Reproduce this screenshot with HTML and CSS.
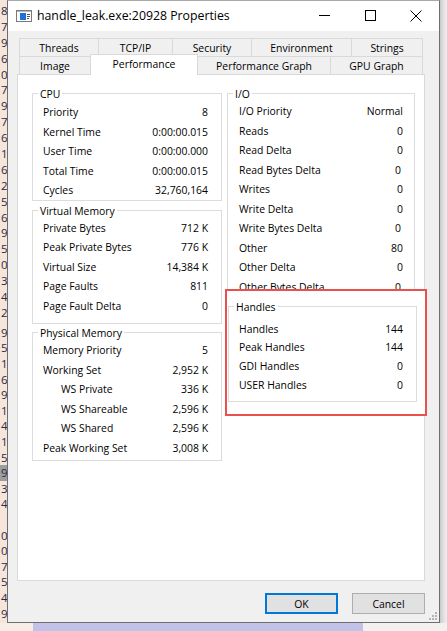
FILE: index.html
```html
<!DOCTYPE html>
<html>
<head>
<meta charset="utf-8">
<title>handle_leak.exe:20928 Properties</title>
<link rel="stylesheet" href="styles.css">
</head>
<body>
<div class="screen">
  <div class="strip">
    <div class="digits d1">
      <div>8</div><div>7</div><div>9</div><div>6</div><div>0</div><div>7</div><div>9</div><div>7</div><div>6</div><div>1</div>
      <div>6</div><div>2</div><div>5</div><div>6</div><div>9</div><div>5</div><div>0</div><div>3</div><div>4</div><div>2</div>
    </div>
    <div class="digits d2">
      <div>9</div><div>5</div><div>1</div><div>6</div><div>9</div><div>1</div><div>4</div><div>1</div><div>5</div><div class="hl">9</div>
      <div>3</div><div>4</div><div>&nbsp;</div><div>0</div><div>0</div><div>7</div><div>5</div><div>4</div><div>9</div>
    </div>
  </div>

  <div class="window">
    <div class="titlebar">
      <svg class="appicon" width="16" height="12" viewBox="0 0 16 12">
        <rect x="0.5" y="0.5" width="15" height="11" fill="#fff" stroke="#7a7a7a"/>
        <rect x="1" y="1" width="14" height="1" fill="#b8b8b8"/>
        <rect x="4" y="3" width="6" height="7" fill="#1e72d4"/>
        <path d="M11 4.5h3M11 6.5h3M11 8.5h2" stroke="#555" stroke-width="1"/>
      </svg>
      <span class="title">handle_leak.exe:20928 Properties</span>
      <div class="caption">
        <div class="cbtn"><svg width="11" height="11" viewBox="0 0 11 11"><path d="M0 5.5h11" stroke="#000" stroke-width="1"/></svg></div>
        <div class="cbtn"><svg width="11" height="11" viewBox="0 0 11 11"><rect x="0.5" y="0.5" width="10" height="10" fill="none" stroke="#000"/></svg></div>
        <div class="cbtn"><svg width="12" height="12" viewBox="0 0 12 12"><path d="M0.5 0.5L11.5 11.5M11.5 0.5L0.5 11.5" stroke="#000" stroke-width="1"/></svg></div>
      </div>
    </div>

    <div class="client">
      <div class="tabs">
        <div class="tabrow back">
          <div class="tab t-threads">Threads</div>
          <div class="tab t-tcp">TCP/IP</div>
          <div class="tab t-security">Security</div>
          <div class="tab t-env">Environment</div>
          <div class="tab t-strings">Strings</div>
        </div>
        <div class="tabrow front">
          <div class="tab t-image">Image</div>
          <div class="tab t-perf selected">Performance</div>
          <div class="tab t-pgraph">Performance Graph</div>
          <div class="tab t-gpu">GPU Graph</div>
        </div>
      </div>

      <div class="panel">
        <div class="col col-left">
          <div class="group cpu">
            <div class="gtitle">CPU</div>
            <div class="rows">
              <div class="row"><span>Priority</span><span>8</span></div>
              <div class="row"><span>Kernel Time</span><span>0:00:00.015</span></div>
              <div class="row"><span>User Time</span><span>0:00:00.000</span></div>
              <div class="row"><span>Total Time</span><span>0:00:00.015</span></div>
              <div class="row"><span>Cycles</span><span>32,760,164</span></div>
            </div>
          </div>
          <div class="group vm">
            <div class="gtitle">Virtual Memory</div>
            <div class="rows">
              <div class="row"><span>Private Bytes</span><span>712 K</span></div>
              <div class="row"><span>Peak Private Bytes</span><span>776 K</span></div>
              <div class="row"><span>Virtual Size</span><span>14,384 K</span></div>
              <div class="row"><span>Page Faults</span><span>811</span></div>
              <div class="row"><span>Page Fault Delta</span><span>0</span></div>
            </div>
          </div>
          <div class="group pm">
            <div class="gtitle">Physical Memory</div>
            <div class="rows">
              <div class="row"><span>Memory Priority</span><span>5</span></div>
              <div class="row"><span>Working Set</span><span>2,952 K</span></div>
              <div class="row sub"><span>WS Private</span><span>336 K</span></div>
              <div class="row sub"><span>WS Shareable</span><span>2,596 K</span></div>
              <div class="row sub"><span>WS Shared</span><span>2,596 K</span></div>
              <div class="row"><span>Peak Working Set</span><span>3,008 K</span></div>
            </div>
          </div>
        </div>

        <div class="col col-right">
          <div class="group io">
            <div class="gtitle">I/O</div>
            <div class="rows">
              <div class="row"><span>I/O Priority</span><span>Normal</span></div>
              <div class="row"><span>Reads</span><span>0</span></div>
              <div class="row"><span>Read Delta</span><span>0</span></div>
              <div class="row"><span>Read Bytes Delta</span><span class="nudge">0</span></div>
              <div class="row"><span>Writes</span><span>0</span></div>
              <div class="row"><span>Write Delta</span><span>0</span></div>
              <div class="row"><span>Write Bytes Delta</span><span class="nudge">0</span></div>
              <div class="row"><span>Other</span><span>80</span></div>
              <div class="row"><span>Other Delta</span><span>0</span></div>
              <div class="row"><span>Other Bytes Delta</span><span class="nudge">0</span></div>
            </div>
          </div>
          <div class="annot">
            <div class="group handles">
              <div class="gtitle">Handles</div>
              <div class="rows">
                <div class="row"><span>Handles</span><span>144</span></div>
                <div class="row"><span>Peak Handles</span><span>144</span></div>
                <div class="row"><span>GDI Handles</span><span>0</span></div>
                <div class="row"><span>USER Handles</span><span>0</span></div>
              </div>
            </div>
          </div>
        </div>
      </div>

      <div class="buttons">
        <div class="btn default">OK</div>
        <div class="btn">Cancel</div>
      </div>

      <svg class="grip" width="9" height="9" viewBox="0 0 9 9">
        <rect x="6" y="0" width="2" height="2" fill="#b4b4b4"/>
        <rect x="3" y="3" width="2" height="2" fill="#b4b4b4"/>
        <rect x="6" y="3" width="2" height="2" fill="#b4b4b4"/>
        <rect x="0" y="6" width="2" height="2" fill="#b4b4b4"/>
        <rect x="3" y="6" width="2" height="2" fill="#b4b4b4"/>
        <rect x="6" y="6" width="2" height="2" fill="#b4b4b4"/>
      </svg>
    </div>
  </div>

  <div class="shadow"></div>
</div>
<div class="floor">
  <div class="floor-a"></div>
  <div class="floor-b"></div>
  <div class="floor-c"></div>
</div>
</body>
</html>
```

FILE: styles.css
```css
html, body {
  margin: 0;
  padding: 0;
}
body {
  width: 447px;
  height: 631px;
  overflow: hidden;
  background: #f4ede8;
  font-family: "Open Sans", "Noto Sans", sans-serif;
  font-size: 10.4px;
  color: #000;
}

.screen {
  display: flex;
  height: 623px;
}

/* background app strip on the left */
.strip {
  width: 7px;
  flex: none;
  background: #f6e5da;
  overflow: hidden;
  font-size: 11.5px;
  color: #2a2a48;
}
.digits div {
  padding-left: 1px;
  white-space: nowrap;
}
.d1 {
  padding-top: 3px;
}
.d1 div {
  height: 15.9px;
  line-height: 15.9px;
}
.d2 {
  padding-top: 4px;
}
.d2 div {
  height: 15.6px;
  line-height: 15.6px;
}
.d2 .hl {
  background: #9d9d9d;
}

/* window frame */
.window {
  width: 433px;
  flex: none;
  box-sizing: border-box;
  border: 1px solid #6e6e6e;
  border-top-color: #a8a8a8;
  display: flex;
  flex-direction: column;
  background: #f0f0f0;
}
.shadow {
  flex: 1;
  background: linear-gradient(to right, #c9c9c9, #e4e4e4 4px, #ececec);
}

.titlebar {
  height: 30px;
  flex: none;
  background: #fff;
  display: flex;
  align-items: center;
}
.appicon {
  margin-left: 8px;
  margin-top: -1px;
  flex: none;
}
.title {
  margin-left: 5px;
  font-size: 12.3px;
  margin-top: -1px;
}
.caption {
  margin-left: auto;
  display: flex;
  height: 30px;
}
.cbtn {
  width: 46px;
  height: 30px;
  display: flex;
  align-items: center;
  justify-content: center;
}
.cbtn svg {
  margin-top: -1px;
}

/* client area */
.client {
  flex: 1;
  position: relative;
  padding: 7px 14px 0 9px;
}

.tabs {
  margin: 0 2px;
}
.tabrow {
  display: flex;
  height: 18px;
}
.tab {
  box-sizing: border-box;
  height: 18px;
  border: 1px solid #d9d9d9;
  border-bottom: none;
  background: #f0f0f0;
  text-align: center;
  line-height: 18px;
  white-space: nowrap;
}
.tab + .tab {
  margin-left: -1px;
}
.tabrow.back .tab {
  line-height: 19px;
}
.tab.selected {
  position: relative;
  z-index: 1;
  height: 21px;
  margin-top: -2px;
  background: #fff;
  line-height: 18px;
}

.t-threads { width: 80px; }
.t-tcp { width: 75px; }
.t-security { width: 80px; }
.t-env { width: 101px; }
.t-strings { width: 72px; }
.t-image { width: 72px; }
.t-perf { width: 108px; }
.t-pgraph { width: 134px; }
.t-gpu { width: 93px; }

.panel {
  box-sizing: border-box;
  height: 507px;
  border: 1px solid #d9d9d9;
  background: #fff;
  padding: 18px 9px 0 14px;
  display: flex;
  gap: 5px;
}
.col-left {
  width: 190px;
  flex: none;
}
.col-right {
  width: 188px;
  flex: none;
}

.group {
  border: 1px solid #dcdcdc;
}
.gtitle {
  width: fit-content;
  margin: -8px 0 0 5px;
  padding: 0 2px;
  background: #fff;
  line-height: 17px;
  height: 15px;
}
.rows {
  padding: 1px 13px 0 10px;
}
.row {
  display: flex;
  justify-content: space-between;
  height: 19.5px;
  line-height: 21px;
  white-space: nowrap;
}
.row.sub {
  padding-left: 18px;
}

.cpu .rows { padding-top: 1.3px; }
.vm { margin-top: 9px; }
.vm .rows { padding-top: 0; padding-bottom: 7.5px; }
.pm { margin-top: 8px; }
.pm .rows { padding-top: 0.5px; padding-bottom: 2.5px; }

.io {
  box-sizing: border-box;
  height: 196px;
  border-bottom: none;
  clip-path: inset(-12px -4px 0 -4px);
}
.io .rows {
  padding: 0 11px 0 11px;
}
.io .nudge {
  margin-right: 2px;
}

/* red annotation rectangle */
.annot {
  box-sizing: border-box;
  width: 202px;
  height: 127px;
  margin-left: -2px;
  border: 2px solid #e8514e;
  background: #fff;
  position: relative;
  padding: 15px 0 0 1px;
}
.handles {
  box-sizing: border-box;
  width: 189px;
}
.handles .rows {
  padding: 4.5px 13px 7.5px 10px;
}
.handles .row {
  height: 18.8px;
  line-height: 20.3px;
}

.buttons {
  display: flex;
  justify-content: flex-end;
  gap: 14px;
  margin-top: 12px;
}
.btn {
  box-sizing: border-box;
  width: 73px;
  height: 21px;
  border: 1px solid #adadad;
  background: #e1e1e1;
  text-align: center;
  line-height: 20px;
}
.btn.default {
  border: 2px solid #0078d7;
  line-height: 18px;
}

.grip {
  position: absolute;
  right: 1px;
  bottom: 1px;
}

.floor {
  display: flex;
  height: 8px;
}
.floor-a {
  width: 33px;
  background: #f7ece6;
}
.floor-b {
  width: 330px;
  background: #c2c2e8;
}
.floor-c {
  flex: 1;
  background: #f4f0ee;
}
```
